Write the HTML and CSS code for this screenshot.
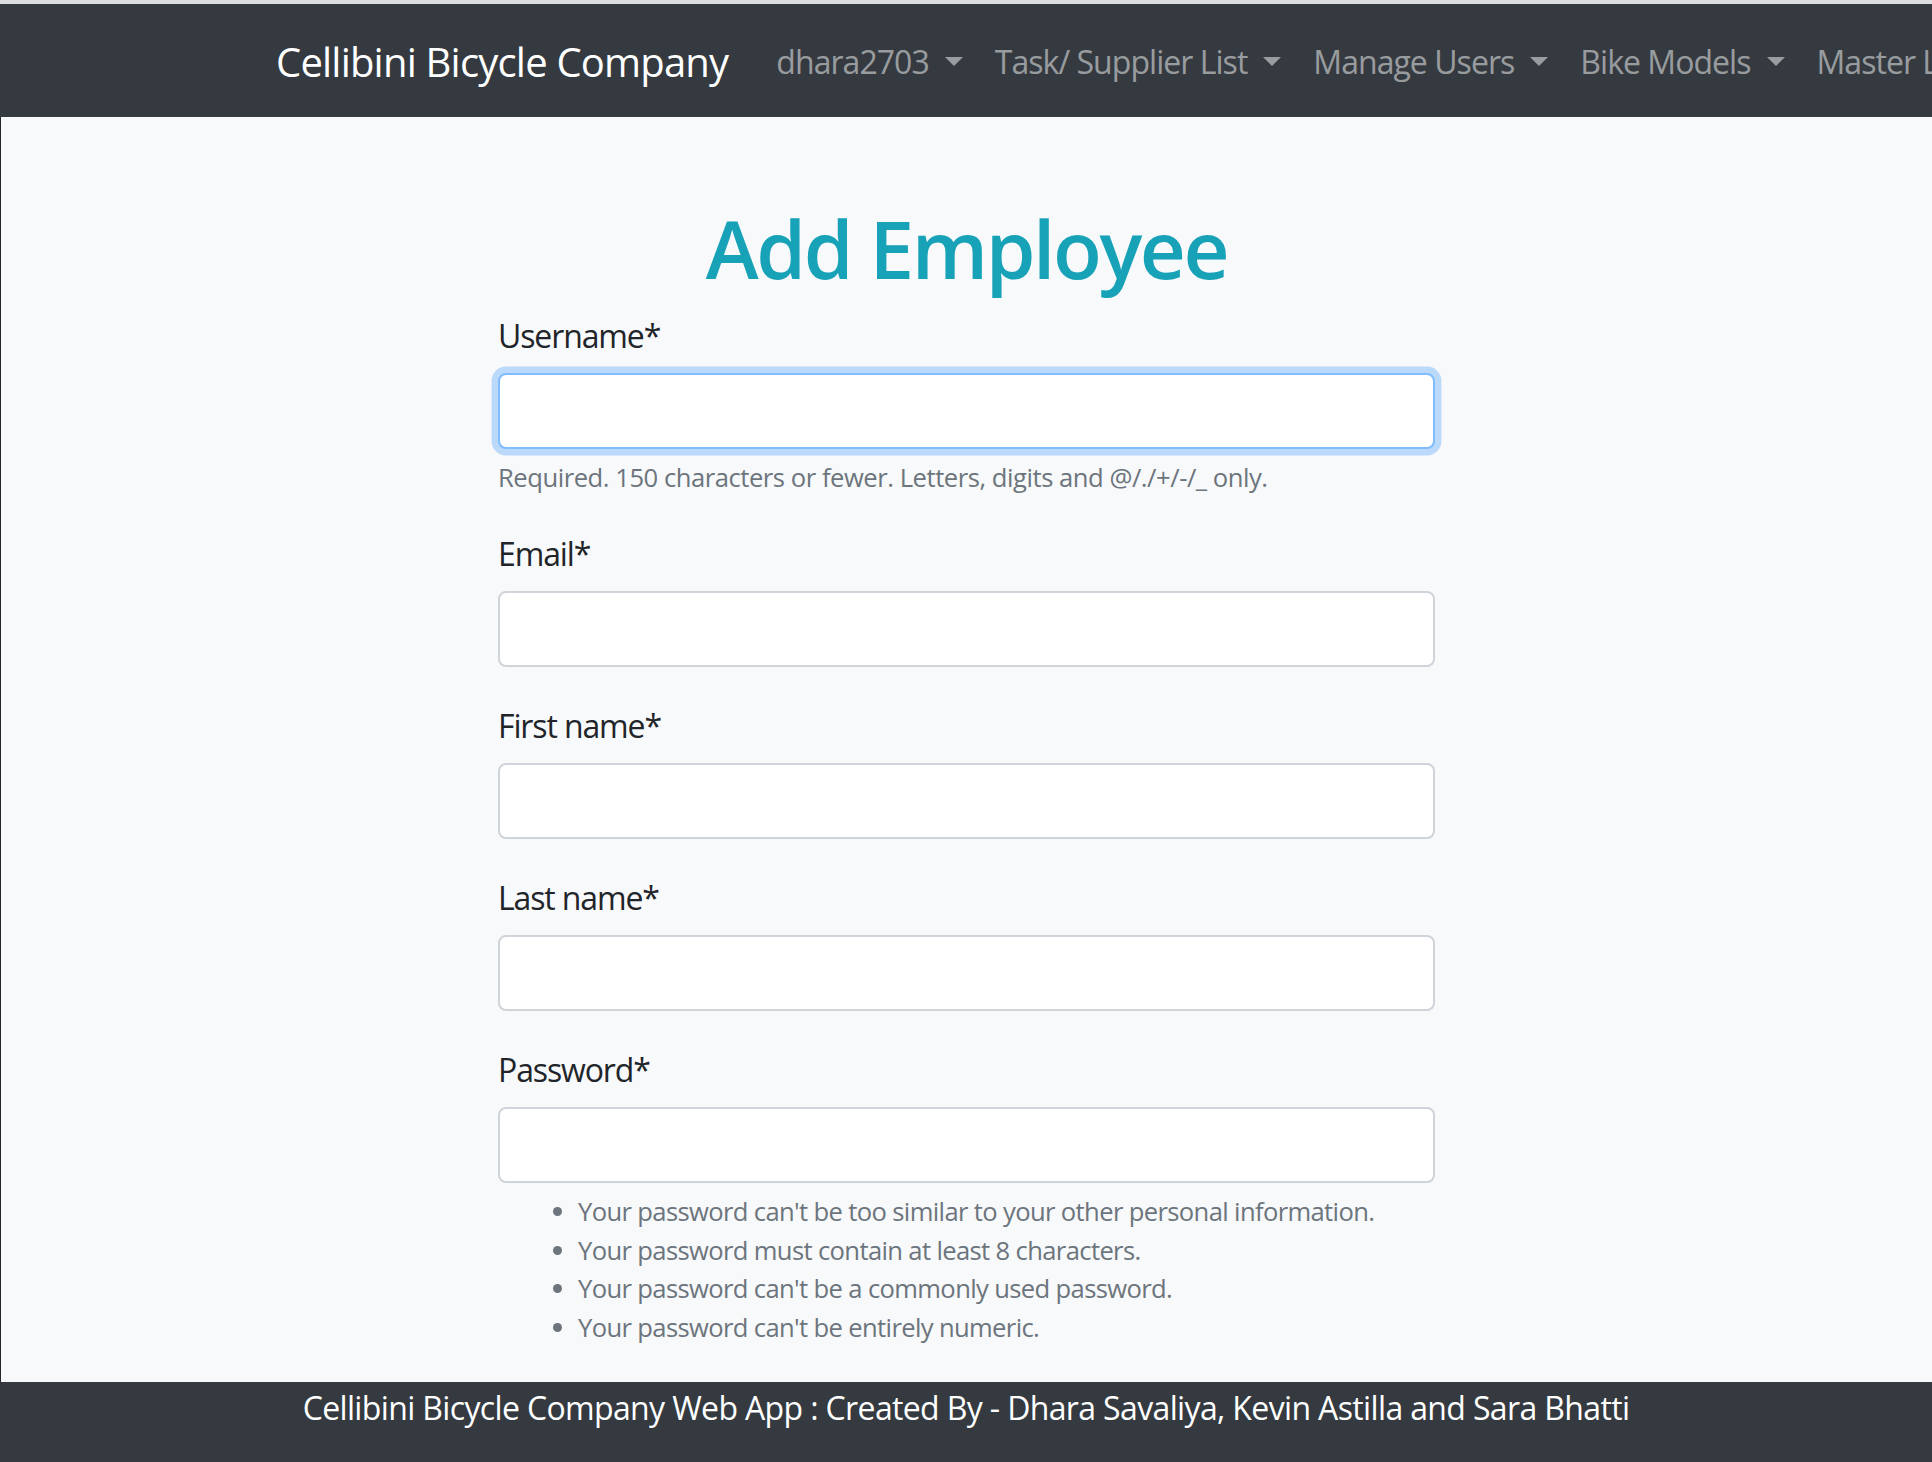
FILE: index.html
```html
<!DOCTYPE html>
<html lang="en">
<head>
<meta charset="utf-8">
<title>Add Employee</title>
<link rel="stylesheet" href="styles.css">
</head>
<body>
<div class="top-strip"></div>
<nav class="navbar">
  <div class="nav-container">
    <a class="brand" href="#">Cellibini Bicycle Company</a>
    <ul class="nav">
      <li><a class="nav-link dropdown" href="#">dhara2703</a></li>
      <li><a class="nav-link dropdown" href="#">Task/ Supplier List</a></li>
      <li><a class="nav-link dropdown" href="#">Manage Users</a></li>
      <li><a class="nav-link dropdown" href="#">Bike Models</a></li>
      <li><a class="nav-link dropdown" href="#">Master List</a></li>
    </ul>
  </div>
</nav>
<main class="page">
  <div class="form-wrap">
    <h1 class="title">Add Employee</h1>
    <form>
      <div class="group">
        <label class="label" for="username">Username*</label>
        <input class="input focused" id="username" type="text">
        <small class="help help-note">Required. 150 characters or fewer. Letters, digits and @/./+/-/_ only.</small>
      </div>
      <div class="group">
        <label class="label" for="email">Email*</label>
        <input class="input" id="email" type="email">
      </div>
      <div class="group">
        <label class="label" for="first">First name*</label>
        <input class="input" id="first" type="text">
      </div>
      <div class="group">
        <label class="label" for="last">Last name*</label>
        <input class="input" id="last" type="text">
      </div>
      <div class="group">
        <label class="label" for="password">Password*</label>
        <input class="input" id="password" type="password">
        <small class="help help-list">
          <ul class="rules">
            <li>Your password can't be too similar to your other personal information.</li>
            <li>Your password must contain at least 8 characters.</li>
            <li>Your password can't be a commonly used password.</li>
            <li>Your password can't be entirely numeric.</li>
          </ul>
        </small>
      </div>
    </form>
  </div>
</main>
<footer class="footer">
  <p class="footer-text">Cellibini Bicycle Company Web App : Created By - Dhara Savaliya, Kevin Astilla and Sara Bhatti</p>
</footer>
</body>
</html>
```

FILE: styles.css
```css
html, body {
  margin: 0;
  padding: 0;
}

body {
  font-family: "Open Sans", "Noto Sans", "DejaVu Sans", sans-serif;
  font-size: 32px;
  line-height: 1.5;
  color: #212529;
  background: #f8f9fa;
  letter-spacing: -0.02em;
  overflow: hidden;
}

.top-strip {
  height: 4px;
  background: #dcdde0;
}

.navbar {
  background: #343a40;
  padding: 16px 0 17px;
  overflow: hidden;
}

.nav-container {
  width: 1440px;
  margin: 0 auto;
  padding: 0 30px;
  box-sizing: border-box;
  display: flex;
  align-items: center;
  flex-wrap: nowrap;
}

.brand {
  font-size: 40px;
  line-height: 60px;
  padding: 12px 0 8px;
  margin-right: 32px;
  color: #fff;
  letter-spacing: -0.02em;
  text-decoration: none;
  white-space: nowrap;
  flex-shrink: 0;
}

.nav {
  display: flex;
  list-style: none;
  margin: 0;
  padding: 0;
  flex-shrink: 0;
}

.nav-link {
  display: block;
  padding: 18px 16px 14px;
  color: rgba(255, 255, 255, 0.5);
  letter-spacing: -0.03em;
  text-decoration: none;
  white-space: nowrap;
}

.dropdown::after {
  content: "";
  display: inline-block;
  margin-left: 16px;
  vertical-align: 0.255em;
  border-top: 0.3em solid;
  border-right: 0.3em solid transparent;
  border-left: 0.3em solid transparent;
}

.page {
  border-left: 1px solid #23272b;
  padding-top: 80px;
  min-height: 1400px;
}

.form-wrap {
  width: 937px;
  margin: 0 auto;
}

.title {
  font-size: 80px;
  font-weight: 600;
  line-height: 1.2;
  margin: 0 0 13px;
  padding-top: 3px;
  text-align: center;
  letter-spacing: -0.03em;
  color: #17a2b8;
}

.group {
  margin-bottom: 32px;
}

.label {
  display: block;
  padding-top: 3px;
  margin-bottom: 13px;
  letter-spacing: -0.035em;
}

.input {
  display: block;
  width: 100%;
  height: 76px;
  box-sizing: border-box;
  padding: 12px 24px;
  font: inherit;
  color: #495057;
  background: #fff;
  border: 2px solid #ced4da;
  border-radius: 8px;
  outline: none;
}

.input.focused {
  border-color: #80bdff;
  box-shadow: 0 0 0 6.4px rgba(0, 123, 255, 0.25);
}

.help {
  display: block;
  margin-top: 6px;
  padding-top: 4px;
  font-size: 25.6px;
  line-height: 1.5;
  color: #6c757d;
}

.help-note {
  margin-bottom: -2px;
  letter-spacing: -0.018em;
}

.rules {
  margin: 0 0 32px;
  padding-left: 80px;
}

.footer {
  position: fixed;
  left: 0;
  right: 0;
  bottom: 0;
  background: #343a40;
  color: #fff;
  text-align: center;
}

.footer-text {
  margin: 0 0 30px;
  padding-top: 2px;
  line-height: 48px;
}
```
